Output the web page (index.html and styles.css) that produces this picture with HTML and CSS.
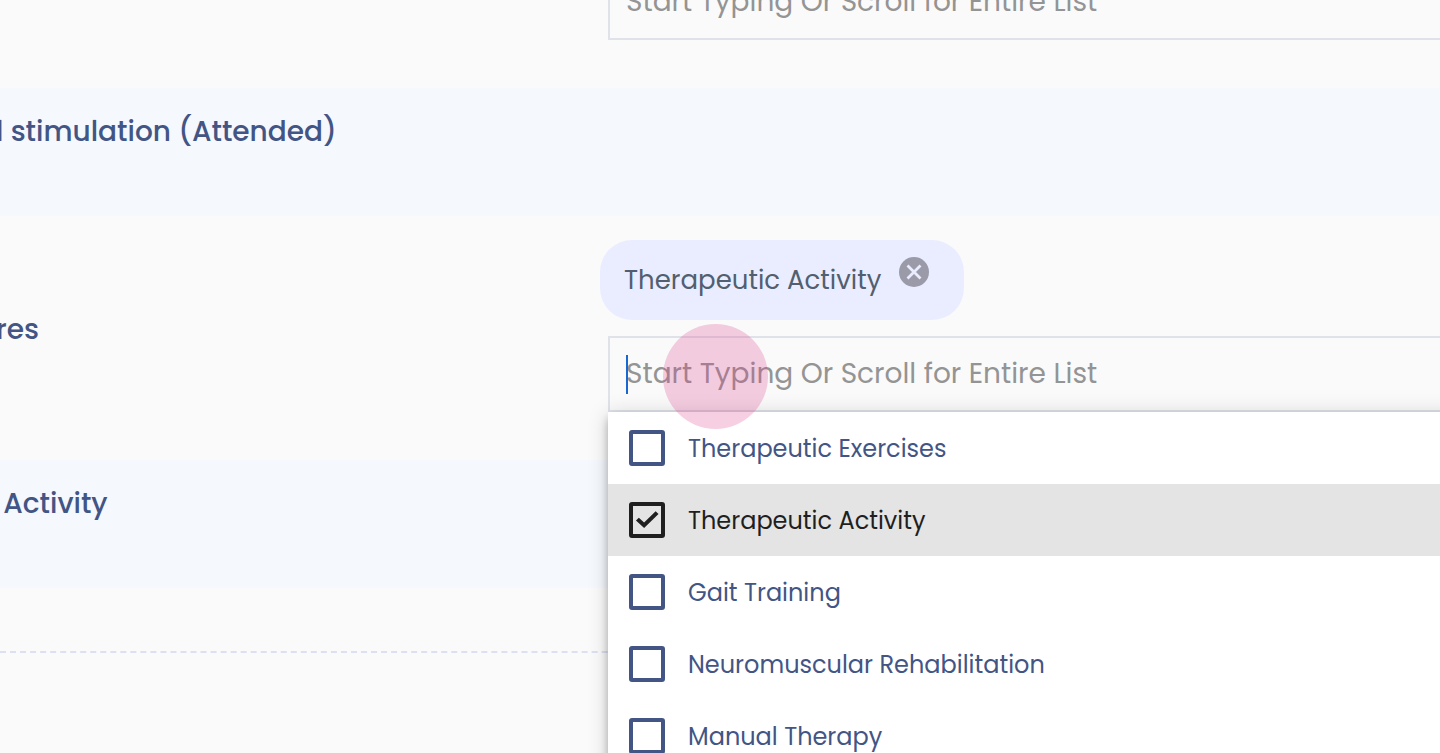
FILE: index.html
```
<!DOCTYPE html>
<html lang="en">

<head>
    <meta charset="utf-8">
    <title>Procedures</title>
    <link rel="stylesheet" href="styles.css">
</head>

<body>
    <form class="form">
        <div class="row row-first">
            <div class="row-label"></div>
            <div class="row-control">
                <input class="search-input" type="text" aria-label="Modality" placeholder="Start Typing Or Scroll for Entire List">
            </div>
        </div>

        <div class="row row-tinted">
            <div class="row-label">l stimulation (Attended)</div>
        </div>

        <div class="row row-procedures">
            <label class="row-label" for="procedures">res</label>
            <div class="row-control">
                <div class="chip">
                    <span>Therapeutic Activity</span>
                    <button class="chip-remove" type="button" aria-label="Remove">
                        <svg viewBox="0 0 30 30" width="30" height="30">
                            <circle cx="15" cy="15" r="15" fill="#9b9aa8" />
                            <path d="M8.5 8.5l13 13M21.5 8.5l-13 13" stroke="#eaedff" stroke-width="2.8" />
                        </svg>
                    </button>
                </div>
                <div class="search">
                    <input class="search-input" id="procedures" type="text" placeholder="Start Typing Or Scroll for Entire List">
                    <span class="caret"></span>
                    <div class="dropdown">
                        <label class="option"><input type="checkbox">Therapeutic Exercises</label>
                        <label class="option option-selected"><input type="checkbox" checked>Therapeutic Activity</label>
                        <label class="option"><input type="checkbox">Gait Training</label>
                        <label class="option"><input type="checkbox">Neuromuscular Rehabilitation</label>
                        <label class="option"><input type="checkbox">Manual Therapy</label>
                    </div>
                    <span class="touch"></span>
                </div>
            </div>
        </div>

        <div class="row row-tinted">
            <div class="row-label">&nbsp;Activity</div>
        </div>

        <div class="divider"></div>
    </form>
</body>

</html>
```

FILE: styles.css
```
:root {
    --bg-color: #fafafa;
    --tint-color: #f5f8fd;
    --font-color: #425585;
    --border-color: #dfe2e9;
}

* {
    box-sizing: border-box;
}

body {
    font-family: Poppins, Inter, sans-serif;
    margin: 0;
    height: 100vh;
    overflow: hidden;
    background-color: var(--bg-color);
    color: var(--font-color);
}

.row {
    display: grid;
    grid-template-columns: 5fr 7fr;
    padding: 24px 0 48px;
}

.row-first {
    grid-template-rows: 100%;
    align-items: end;
    height: 88px;
    overflow: hidden;
}

.row-first .search-input {
    margin-left: 8px;
}

.row-tinted {
    min-height: 128px;
    background-color: var(--tint-color);
}

.row-procedures {
    align-items: center;
}

.row-procedures .row-label {
    padding-top: 8px;
}

.row-label {
    margin-left: -4px;
    font-size: 28px;
    font-weight: 500;
    line-height: 40px;
    white-space: nowrap;
}

.chip {
    display: inline-flex;
    align-items: center;
    gap: 18px;
    height: 80px;
    padding: 0 35px 0 24px;
    border-radius: 32px;
    background-color: #eaedff;
    color: #525f70;
    font-size: 26px;
    vertical-align: top;
}

.chip-remove {
    width: 30px;
    height: 30px;
    margin-bottom: 16px;
    padding: 0;
    border: none;
    background: none;
    cursor: pointer;
}

.chip-remove svg {
    display: block;
}

.search {
    position: relative;
    margin: 16px 0 0 8px;
}

.search-input {
    display: block;
    width: 100%;
    height: 76px;
    padding: 0 16px;
    border: 2px solid var(--border-color);
    border-right: none;
    border-radius: 0;
    outline: none;
    background: transparent;
    color: var(--font-color);
    font-family: inherit;
    font-size: 28px;
}

.search-input::placeholder {
    color: #949494;
    opacity: 1;
}

.caret {
    position: absolute;
    top: 19px;
    left: 18px;
    width: 2px;
    height: 39px;
    background-color: #1967d2;
}

.dropdown {
    position: absolute;
    top: 100%;
    left: 0;
    right: -24px;
    background-color: #fff;
    box-shadow: 0 4px 8px -2px rgba(0,0,0,0.2), 0 8px 10px 0 rgba(0,0,0,0.14), 0 2px 20px 0 rgba(0,0,0,0.16);
}

.option {
    display: flex;
    align-items: center;
    gap: 23px;
    height: 72px;
    padding-left: 21px;
    font-size: 24px;
    cursor: pointer;
}

.option input {
    appearance: none;
    display: grid;
    place-items: center;
    width: 36px;
    height: 36px;
    margin: 0;
    border: 4px solid currentColor;
    border-radius: 3px;
    color: inherit;
}

.option input:checked::before {
    content: "";
    width: 24px;
    height: 18px;
    background-color: currentColor;
    clip-path: polygon(4% 53%, 16% 38%, 38% 64%, 86% 2%, 98% 17%, 38% 94%);
}

.option-selected {
    background-color: #e4e4e4;
    color: #1f1f1f;
}

/* tap indicator */
.touch {
    position: absolute;
    top: -12px;
    left: 55px;
    width: 105px;
    height: 105px;
    border-radius: 50%;
    background-color: rgba(219,63,139,0.25);
    pointer-events: none;
}

.divider {
    height: 65px;
    border-bottom: 2px dashed #dce0f2;
}
```
